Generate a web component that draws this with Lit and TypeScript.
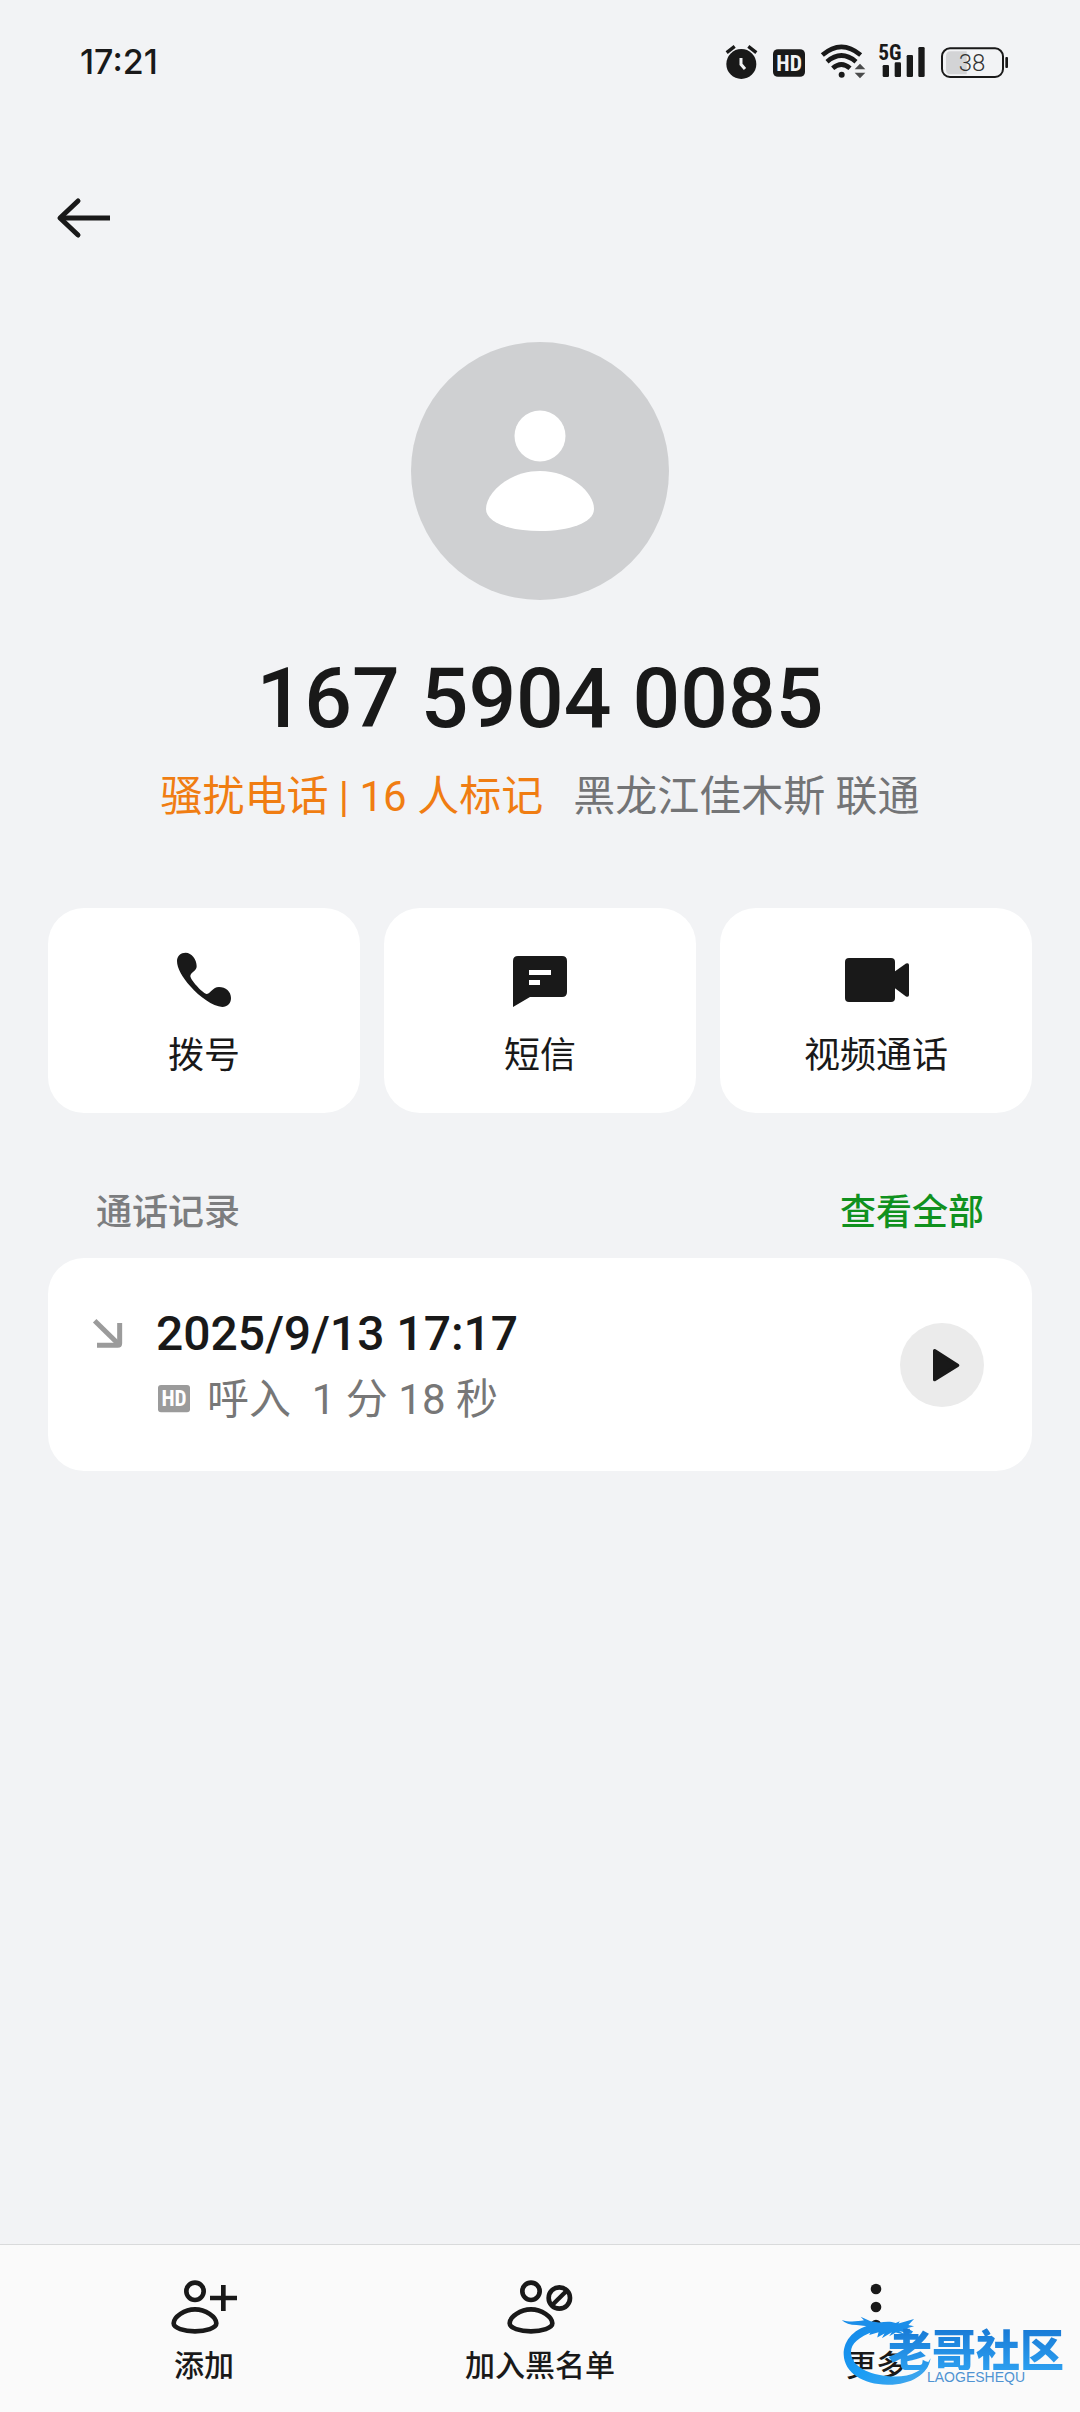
import { LitElement, html, css, svg } from "lit";
import { customElement } from "lit/decorators.js";

const PERSON_HEAD = svg`<circle cx="225" cy="184" r="26"/>`;
const PERSON_BODY = svg`<path d="M225 238C256 238 289 260 289 280C289 294 258 304 225 304C192 304 161 294 161 280C161 260 194 238 225 238Z"/>`;

const ICONS = {
  phone: svg`<svg viewBox="414 162 216 216" aria-hidden="true"><path fill="currentColor" d="M441 213C441 198 452 188 467 188C485 188 500 208 500 229C500 244 482 247 481 258C481 270 516 307 529 312C541 312 548 291 567 291C587 291 603 305 603 324C603 340 592 351 577 351C548 349 509 321 481 289C457 262 441 235 441 213Z"/></svg>`,
  message: svg`<svg viewBox="0 0 72 72" aria-hidden="true"><path fill="currentColor" fill-rule="evenodd" d="M9 17Q9 12 14 12H58Q63 12 63 17V48Q63 53 58 53H26L9 63ZM25 26V31H47V26ZM25 36V41H36V36Z"/></svg>`,
  video: svg`<svg viewBox="0 0 72 72" aria-hidden="true"><rect x="5" y="14" width="50" height="44" rx="4" fill="currentColor"/><path fill="currentColor" d="M54 28L66 19.500Q69 18.500 69 21V51Q69 53.500 66 52.500L54 43.500Z"/></svg>`,
  add: svg`<svg viewBox="144 120 216 216" aria-hidden="true"><g fill="none" stroke="currentColor" stroke-width="14">${PERSON_HEAD}${PERSON_BODY}<path d="M310 165V243M270 204H351"/></g></svg>`,
  block: svg`<svg viewBox="144 120 216 216" aria-hidden="true"><g fill="none" stroke="currentColor" stroke-width="14">${PERSON_HEAD}${PERSON_BODY}<circle cx="310" cy="204" r="32"/><path d="M288 226L332 182" stroke-width="13"/></g></svg>`,
  more: svg`<svg viewBox="0 0 72 72" aria-hidden="true"><g fill="currentColor"><circle cx="36" cy="19" r="5.300"/><circle cx="36" cy="37" r="5.300"/><circle cx="36" cy="55" r="5.300"/></g></svg>`,
};

const ACTIONS = [
  { icon: ICONS.phone, label: "拨号" },
  { icon: ICONS.message, label: "短信" },
  { icon: ICONS.video, label: "视频通话" },
];

const TOOLS = [
  { icon: ICONS.add, label: "添加" },
  { icon: ICONS.block, label: "加入黑名单" },
  { icon: ICONS.more, label: "更多" },
];

@customElement("status-bar")
class StatusBar extends LitElement {
  static styles = css`
    :host {
      display: flex;
      align-items: center;
      justify-content: space-between;
      height: 124px;
      padding: 0 72px 0 80px;
      color: #191919;
    }
    .time {
      font-family: Inter, Roboto, sans-serif;
      font-size: 34px;
      line-height: 48px;
      font-weight: 500;
    }
    .icons {
      display: flex;
      align-items: center;
      gap: 16px;
    }
    svg {
      display: block;
      height: 36px;
      overflow: visible;
    }
    .alarm { width: 31px; }
    .hd { width: 32px; }
    .wifi { width: 42px; }
    .signal { width: 46px; }
    .battery { width: 67px; }
    .narrow {
      font-family: "Roboto Condensed", "Liberation Sans Narrow", Roboto, sans-serif;
      font-weight: 700;
    }
    .level {
      font-family: Roboto, sans-serif;
      font-weight: 300;
    }
  `;

  render() {
    return html`
      <time class="time">17:21</time>
      <div class="icons">
        <svg class="alarm" viewBox="77 72 93 108" role="img" aria-label="闹钟">
          <circle cx="123" cy="132" r="45" fill="currentColor" />
          <path d="M79 98L103 79M144 79L168 98" stroke="currentColor" stroke-width="10" />
          <path d="M122 114V133L134 147" fill="none" stroke="#f2f3f5" stroke-width="9" />
        </svg>
        <svg class="hd" viewBox="218 72 97 108" role="img" aria-label="HD">
          <rect x="218" y="87" width="97" height="84" rx="15" fill="currentColor" />
          <text class="narrow" x="267" y="153" font-size="66" text-anchor="middle" fill="#f2f3f5">HD</text>
        </svg>
        <svg class="wifi" viewBox="363 72 126 108" role="img" aria-label="WLAN">
          <g fill="none" stroke="currentColor" stroke-width="14">
            <path d="M367 105Q424 56 482 105" />
            <path d="M381 125Q424 88 468 125" />
            <path d="M398 145Q424 122 450 145" />
          </g>
          <circle cx="425" cy="164" r="9" fill="currentColor" />
          <path d="M464 148L480 131L496 148ZM464 158L480 175L496 158Z" fill="#4b4b4c" />
        </svg>
        <svg class="signal" viewBox="537 72 138 108" role="img" aria-label="5G">
          <text class="narrow" x="535" y="121" font-size="64" fill="currentColor">5G</text>
          <g fill="currentColor">
            <rect x="548" y="135" width="19" height="36" rx="4" />
            <rect x="584" y="127" width="19" height="44" rx="4" />
            <rect x="620" y="105" width="19" height="66" rx="4" />
            <rect x="655" y="81" width="19" height="90" rx="4" />
          </g>
        </svg>
        <svg class="battery" viewBox="723 72 201 108" role="img" aria-label="电量 38%">
          <path d="M752 94H800V163H752Q738 163 738 149V108Q738 94 752 94Z" fill="#d3d4d6" />
          <rect x="726" y="85" width="183" height="86" rx="24" fill="none" stroke="currentColor" stroke-width="6" />
          <rect x="916" y="111" width="8" height="33" rx="3" fill="currentColor" />
          <text class="level" x="816" y="153" font-size="72" text-anchor="middle" fill="#333">38</text>
        </svg>
      </div>
    `;
  }
}

@customElement("call-record")
class CallRecord extends LitElement {
  static styles = css`
    :host {
      display: flex;
      align-items: center;
      justify-content: space-between;
      padding: 0 48px 0 42px;
      border-radius: 36px;
      background: #fff;
    }
    .body {
      display: grid;
      grid-template-columns: 36px auto;
      align-items: center;
      gap: 2px 30px;
      padding: 44px 0 39px;
    }
    .incoming {
      width: 36px;
      height: 36px;
      color: #9b9b9b;
    }
    .date {
      font-size: 48px;
      line-height: 64px;
      font-weight: 500;
      color: #191919;
    }
    .detail {
      grid-column: 2;
      display: flex;
      align-items: center;
      gap: 17px;
      padding-left: 2px;
      font-size: 42px;
      line-height: 64px;
      color: #777;
      white-space: pre;
    }
    .hd {
      width: 32px;
      height: 30px;
      color: #9b9b9b;
    }
    .narrow {
      font-family: "Roboto Condensed", "Liberation Sans Narrow", Roboto, sans-serif;
      font-weight: 700;
    }
    .play {
      width: 84px;
      height: 84px;
      padding: 0;
      border: 0;
      border-radius: 50%;
      background: #ebebeb;
      color: #191919;
    }
    svg {
      display: block;
    }
  `;

  render() {
    return html`
      <div class="body">
        <svg class="incoming" viewBox="180 438 108 108" aria-hidden="true">
          <g fill="none" stroke="currentColor" stroke-width="15">
            <path d="M194 452L266 523" />
            <path d="M269 459V520Q269 526 263 526H201" />
          </g>
        </svg>
        <span class="date">2025/9/13 17:17</span>
        <div class="detail"><svg class="hd" viewBox="0 0 96 90" role="img" aria-label="HD"><rect width="96" height="82" rx="9" fill="currentColor"/><text class="narrow" x="48" y="64" font-size="64" text-anchor="middle" fill="#fff">HD</text></svg><span>呼入  1 分 18 秒</span></div>
      </div>
      <button class="play" type="button" aria-label="播放录音">
        <svg viewBox="0 0 252 252" aria-hidden="true">
          <path d="M104 83V170L173 127Z" fill="currentColor" stroke="currentColor" stroke-width="10" stroke-linejoin="round" />
        </svg>
      </button>
    `;
  }
}

@customElement("brand-mark")
class BrandMark extends LitElement {
  static styles = css`
    :host {
      display: grid;
      pointer-events: none;
    }
    .swoosh,
    .words {
      grid-area: 1 / 1;
    }
    .swoosh {
      width: 93px;
      height: 73px;
    }
    .words {
      display: flex;
      flex-direction: column;
      align-items: center;
      padding: 13px 0 0 48px;
    }
    .name {
      font-family: "Noto Sans CJK SC", sans-serif;
      font-size: 44px;
      line-height: 44px;
      font-weight: 900;
      color: transparent;
      background: linear-gradient(#1878d4, #2c9ff0);
      background-clip: text;
      -webkit-background-clip: text;
    }
    .latin {
      font-family: "Liberation Sans", sans-serif;
      font-size: 14px;
      line-height: 14px;
      color: #4f93d2;
    }
  `;

  render() {
    return html`
      <svg class="swoosh" viewBox="120 250 280 220" aria-hidden="true">
        <defs>
          <linearGradient id="wave" x1="0" y1="0" x2="1" y2="1">
            <stop offset="0" stop-color="#1687e6" />
            <stop offset=".5" stop-color="#1a9df5" />
            <stop offset="1" stop-color="#4aa8ea" />
          </linearGradient>
        </defs>
        <path fill="url(#wave)" d="M222 283C165 294 130 330 131 376C133 430 190 467 266 466C334 465 385 436 393 386C374 424 328 445 273 441C205 436 153 410 153 368C153 343 176 322 222 306Z" />
        <path fill="#1b8ee9" d="M125 271C150 279 172 275 192 272L182 261L212 275L238 279C256 276 270 274 288 280L300 275L296 282L343 268L326 286L343 290L322 296L340 306L334 313L298 304L318 316L288 309L268 320L276 308L246 326L254 312L232 324L236 308L208 316L214 303L190 306L210 291L170 286Q140 286 125 271Z" />
      </svg>
      <div class="words">
        <span class="name">老哥社区</span>
        <span class="latin">LAOGESHEQU</span>
      </div>
    `;
  }
}

@customElement("app-root")
class AppRoot extends LitElement {
  static styles = css`
    :host {
      position: relative;
      display: flex;
      flex-direction: column;
      min-height: 100vh;
      background: #f2f3f5;
      color: #191919;
      font-family: Roboto, "Noto Sans CJK SC", sans-serif;
    }
    button {
      border: 0;
      font: inherit;
      color: inherit;
    }
    svg {
      display: block;
    }
    .header {
      display: flex;
      align-items: center;
      height: 188px;
      padding: 0 48px;
    }
    .back {
      width: 72px;
      height: 72px;
      padding: 0;
      background: none;
    }
    .main {
      flex: 1;
      display: flex;
      flex-direction: column;
      padding: 30px 48px 48px;
    }
    .profile {
      display: flex;
      flex-direction: column;
      align-items: center;
    }
    .avatar {
      width: 258px;
      height: 258px;
    }
    .number {
      margin: 51px 0 0;
      font-size: 84px;
      line-height: 96px;
      font-weight: 500;
    }
    .tags {
      display: flex;
      gap: 30px;
      margin: 22px 0 0;
      font-size: 42px;
      line-height: 56px;
      color: #737476;
    }
    .spam {
      color: #f07d12;
    }
    .actions,
    .toolbar {
      display: grid;
      grid-template-columns: repeat(3, 1fr);
      gap: 24px;
    }
    .actions {
      margin-top: 83px;
    }
    .action {
      display: flex;
      flex-direction: column;
      align-items: center;
      gap: 16px;
      padding: 36px 0 33px;
      border-radius: 36px;
      background: #fff;
      font-size: 36px;
      line-height: 48px;
    }
    .icon {
      width: 72px;
      height: 72px;
    }
    .section {
      display: flex;
      align-items: center;
      justify-content: space-between;
      margin: 76px 48px 21px;
      font-size: 36px;
      line-height: 48px;
      font-weight: 500;
    }
    .title {
      margin: 0;
      font: inherit;
      color: #7c7d7f;
    }
    .all {
      color: #10911e;
      text-decoration: none;
    }
    .toolbar {
      padding: 0 48px;
      border-top: 1px solid #d9dadb;
      background: #fafafa;
    }
    .tool {
      display: flex;
      flex-direction: column;
      align-items: center;
      gap: 6px;
      padding: 25px 0 28px;
      background: none;
      font-size: 30px;
      line-height: 36px;
      font-weight: 500;
    }
    .mark {
      position: absolute;
      right: 16px;
      bottom: 26px;
    }
  `;

  render() {
    return html`
      <status-bar></status-bar>
      <header class="header">
        <button class="back" type="button" aria-label="返回">
          <svg viewBox="0 0 72 72" aria-hidden="true">
            <g fill="none" stroke="currentColor" stroke-width="5">
              <path d="M30 19L12 36L30 53" stroke-linecap="round" stroke-linejoin="round" />
              <path d="M13 36H62" />
            </g>
          </svg>
        </button>
      </header>
      <main class="main">
        <section class="profile">
          <svg class="avatar" viewBox="0 0 258 258" role="img" aria-label="联系人头像">
            <circle cx="129" cy="129" r="129" fill="#cfd0d2" />
            <circle cx="129" cy="94" r="25.500" fill="#fff" />
            <path fill="#fff" d="M129 129C159 129 183 150 183 167C183 181 158 189 129 189C100 189 75 181 75 167C75 150 99 129 129 129Z" />
          </svg>
          <h1 class="number">167 5904 0085</h1>
          <p class="tags">
            <span class="spam">骚扰电话 | 16 人标记</span>
            <span>黑龙江佳木斯 联通</span>
          </p>
        </section>
        <div class="actions">
          ${ACTIONS.map(
            (a) => html`<button class="action" type="button"><span class="icon">${a.icon}</span><span>${a.label}</span></button>`
          )}
        </div>
        <div class="section">
          <h2 class="title">通话记录</h2>
          <a class="all" href="#all">查看全部</a>
        </div>
        <call-record></call-record>
      </main>
      <nav class="toolbar">
        ${TOOLS.map(
          (t) => html`<button class="tool" type="button"><span class="icon">${t.icon}</span><span>${t.label}</span></button>`
        )}
      </nav>
      <brand-mark class="mark"></brand-mark>
    `;
  }
}
